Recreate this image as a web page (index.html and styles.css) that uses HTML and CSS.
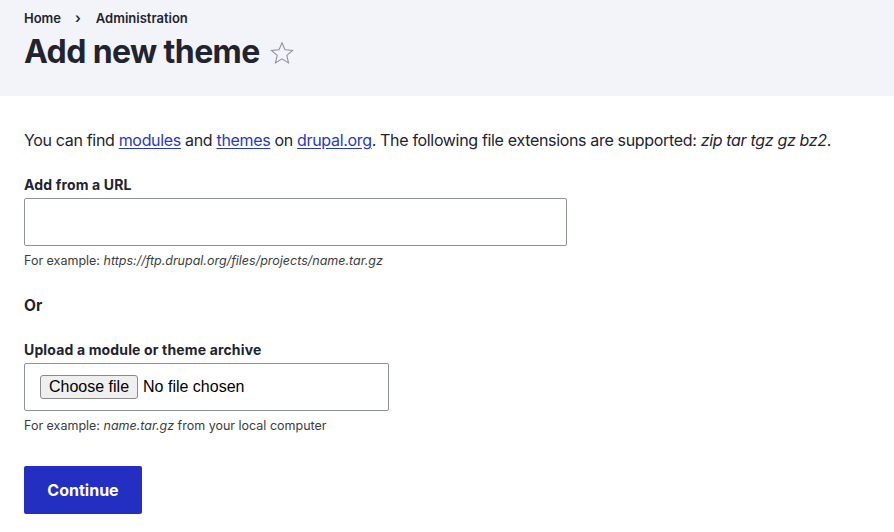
FILE: index.html
```html
<!DOCTYPE html>
<html>
<head>
<meta charset="utf-8">
<link rel="stylesheet" href="styles.css">
</head>
<body>
<header class="page-header">
  <nav class="breadcrumb">
    <a href="#">Home</a>
    <span class="sep">›</span>
    <a href="#">Administration</a>
  </nav>
  <div class="title-row">
    <h1>Add new theme</h1>
    <svg class="star" width="26" height="26" viewBox="0 0 24 24"><path d="M12 2.6l2.75 6.45 6.98.6-5.3 4.6 1.6 6.85L12 17.45 5.97 21.1l1.6-6.85-5.3-4.6 6.98-.6z" fill="none" stroke="#8e929c" stroke-width="1" stroke-linejoin="miter"/></svg>
  </div>
</header>
<main class="content">
  <p class="intro">You can find <a href="#">modules</a> and <a href="#">themes</a> on <a href="#">drupal.org</a>. The following file extensions are supported: <em>zip tar tgz gz bz2</em>.</p>
  <div class="field">
    <label class="label">Add from a URL</label>
    <div class="url-input"></div>
    <div class="desc">For example: <em>https://ftp.drupal.org/files/projects/name.tar.gz</em></div>
  </div>
  <div class="or">Or</div>
  <div class="field field-upload">
    <label class="label">Upload a module or theme archive</label>
    <div class="file-input"><span class="choose">Choose file</span><span class="nofile">No file chosen</span></div>
    <div class="desc">For example: <em>name.tar.gz</em> from your local computer</div>
  </div>
  <button class="btn">Continue</button>
</main>
</body>
</html>
```
FILE: styles.css
```css
* { box-sizing: border-box; }
body {
  margin: 0;
  font-family: Inter, "Noto Sans", sans-serif;
  color: #222330;
  background: #fff;
}
.page-header {
  background: #f3f4f9;
  height: 96px;
  padding: 10px 24px 0;
}
.breadcrumb {
  display: flex;
  align-items: center;
  font-size: 13px;
  font-weight: 600;
  line-height: 16px;
}
.breadcrumb a { color: #222330; text-decoration: none; }
.breadcrumb .sep { margin: 0 15px 0 14px; font-size: 14px; }
.title-row {
  display: flex;
  align-items: center;
  margin-top: 6px;
}
h1 {
  margin: 0;
  font-size: 32px;
  font-weight: 700;
  line-height: 40px;
  letter-spacing: -0.6px;
}
.star { margin-left: 9px; margin-top: 2px; }
.content { padding: 32px 24px 0; }
.intro {
  margin: 0;
  font-size: 16px;
  line-height: 24px;
  letter-spacing: -0.33px;
}
.intro a { color: #2739c5; text-decoration: underline; text-underline-offset: 2px; }
.field { margin-top: 24px; }
.label {
  display: block;
  font-size: 14px;
  font-weight: 700;
  line-height: 18px;
  letter-spacing: 0.15px;
  margin-bottom: 4px;
}
.url-input {
  width: 543px;
  height: 48px;
  border: 1px solid #8e929c;
  border-radius: 2px;
}
.desc {
  font-size: 12.5px;
  line-height: 16px;
  color: #3b3c42;
  margin-top: 7px;
}
.or {
  margin-top: 27px;
  font-size: 15.5px;
  font-weight: 700;
  line-height: 20px;
}
.field-upload { margin-top: 25px; }
.file-input {
  width: 365px;
  height: 48px;
  border: 1px solid #8e929c;
  border-radius: 2px;
  display: flex;
  align-items: center;
  padding-left: 15px;
  font-family: "Liberation Sans", Arial, sans-serif;
  font-size: 16px;
}
.choose {
  background: #efefef;
  border: 1px solid #8a8a8a;
  border-radius: 3px;
  padding: 2px 8px;
  line-height: 18px;
  color: #000;
}
.nofile { margin-left: 5px; color: #000; }
.btn {
  display: block;
  margin-top: 32px;
  width: 118px;
  height: 48px;
  background: #232fc0;
  color: #fff;
  border: none;
  border-radius: 2px;
  font-family: Inter, sans-serif;
  font-size: 16px;
  font-weight: 700;
}
```
